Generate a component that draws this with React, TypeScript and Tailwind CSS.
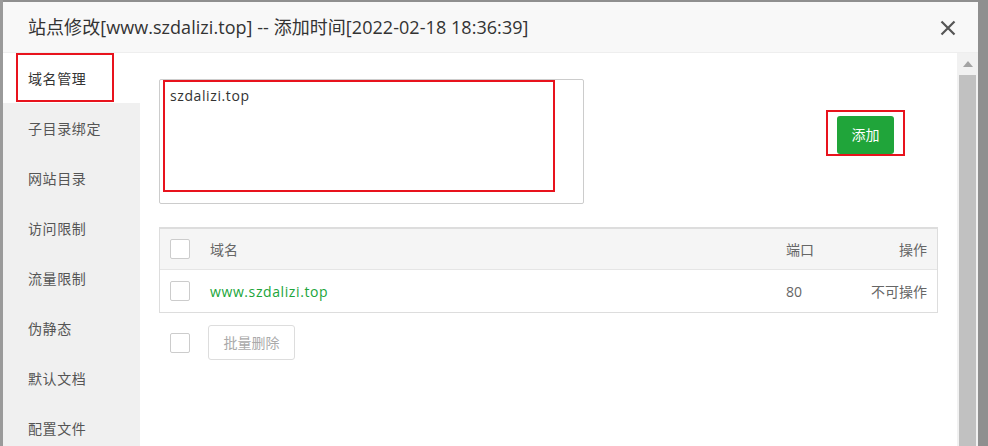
const menu = ['域名管理', '子目录绑定', '网站目录', '访问限制', '流量限制', '伪静态', '默认文档', '配置文件'];

function Checkbox() {
  return <span className="block w-5 h-5 shrink-0 rounded-[2px] border border-[#cccccc] bg-white" />;
}

export default function App() {
  return (
    <div
      className="flex w-[988px] h-[446px] overflow-hidden bg-[#8f8f8f] text-[#555555]"
      style={{ fontFamily: '"Open Sans", "Noto Sans CJK SC", sans-serif' }}
    >
      <div className="w-[3px] shrink-0 bg-[#9a9a9a]" />
      <div className="flex flex-col w-[975px] shrink-0 bg-white pt-[2px] bg-clip-content">
        {/* header */}
        <div className="flex items-center justify-between h-[51px] shrink-0 pl-[25px] pr-[22px] bg-[#f8f8f8] border-b border-[#eeeeee]">
          <span className="text-[18px] text-[#333333] tracking-[0.05px]">
            站点修改[www.szdalizi.top] -- 添加时间[2022-02-18 18:36:39]
          </span>
          <svg width="16" height="16" viewBox="0 0 16 16" className="mt-[1px]">
            <path d="M1.5 1.5 L14.5 14.5 M14.5 1.5 L1.5 14.5" stroke="#555" strokeWidth="2.2" />
          </svg>
        </div>

        <div className="flex flex-1 min-h-0">
          {/* sidebar */}
          <div className="w-[137px] shrink-0 bg-[#f0f0f0] flex flex-col">
            {menu.map((m, i) => (
              <div
                key={m}
                className={
                  i === 0
                    ? 'relative h-[50px] shrink-0 flex items-center pl-[25px] text-[14px] tracking-[0.6px] text-[#333333] bg-white'
                    : 'h-[50px] shrink-0 flex items-center pl-[25px] text-[14px] tracking-[0.6px] text-[#555555]'
                }
              >
                {i === 0 && (
                  <span className="absolute left-[13px] top-0 w-[98px] h-[49px] border-2 border-[#e8131d]" />
                )}
                <span className="relative">{m}</span>
              </div>
            ))}
          </div>

          {/* content */}
          <div className="flex-1 pl-[19px] pr-[19px] pt-[26px]">
            <div className="flex items-start">
              <div className="relative w-[425px] h-[125px] border border-[#cccccc] rounded-[2px] bg-white">
                <span className="absolute left-[3px] top-0 w-[392px] h-[112px] border-2 border-[#e8131d]" />
                <span className="absolute left-[10px] top-[5px] text-[14px] tracking-[0.6px] text-[#333333]">szdalizi.top</span>
              </div>
              <div className="ml-[242px] mt-[31px] w-[79px] h-[46px] border-2 border-[#e8131d] flex items-center justify-center">
                <button className="w-[57px] h-[38px] mt-[3px] rounded-[3px] bg-[#20a53a] text-white text-[14px]">添加</button>
              </div>
            </div>

            <div className="mt-[23px] w-[779px] border border-[#dddddd] border-t-2">
              <div className="flex items-center h-[41px] bg-[#f5f5f5] border-b border-[#e5e5e5] pl-[10px] pr-[10px] text-[14px] text-[#666666]">
                <Checkbox />
                <span className="ml-[20px] flex-1">域名</span>
                <span className="w-[60px]">端口</span>
                <span className="w-[81px] text-right">操作</span>
              </div>
              <div className="flex items-center h-[42px] pl-[10px] pr-[10px] text-[14px] text-[#666666]">
                <Checkbox />
                <span className="ml-[20px] flex-1 text-[#20a53a] tracking-[0.6px]">www.szdalizi.top</span>
                <span className="w-[60px]">80</span>
                <span className="w-[81px] text-right">不可操作</span>
              </div>
            </div>

            <div className="flex items-center mt-[12px] pl-[11px]">
              <Checkbox />
              <button className="ml-[18px] w-[87px] h-[35px] rounded-[3px] border border-[#dddddd] bg-white text-[14px] text-[#aaaaaa]">
                批量删除
              </button>
            </div>
          </div>

          {/* scrollbar */}
          <div className="w-[21px] shrink-0 bg-[#f1f1f1] flex flex-col items-center pt-[8px]">
            <svg width="10" height="6" viewBox="0 0 10 6">
              <path d="M0 6 L5 0 L10 6 Z" fill="#a3a3a3" />
            </svg>
            <div className="mt-[8px] w-[17px] flex-1 bg-[#c1c1c1]" />
          </div>
        </div>
      </div>
    </div>
  );
}
